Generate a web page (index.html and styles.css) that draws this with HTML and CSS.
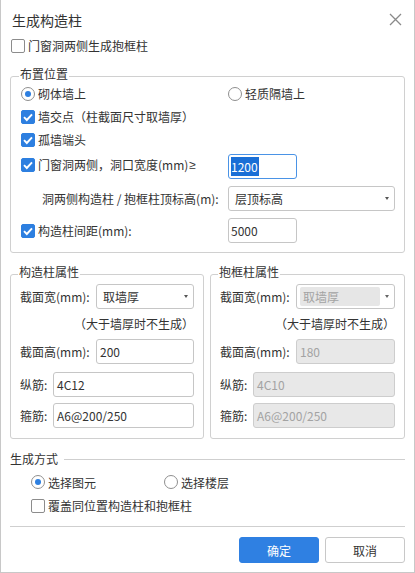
FILE: index.html
```html
<!DOCTYPE html>
<html lang="zh-CN">
<head>
<meta charset="utf-8">
<title>生成构造柱</title>
<link rel="stylesheet" href="styles.css">
</head>
<body>
<div class="dialog">
  <div class="header">
    <span class="title">生成构造柱</span>
    <svg class="close" viewBox="0 0 13 13"><path d="M1 1L12 12M12 1L1 12" stroke="#8a8a8a" stroke-width="1.3" fill="none"/></svg>
  </div>

  <label class="row top-check"><span class="cb"></span><span>门窗洞两侧生成抱框柱</span></label>

  <fieldset class="group place">
    <legend>布置位置</legend>
    <div class="radios">
      <label class="opt"><span class="rb on"></span>砌体墙上</label>
      <label class="opt"><span class="rb"></span>轻质隔墙上</label>
    </div>
    <label class="row mt5"><span class="cb on"><svg viewBox="0 0 14 14"><path d="M3 7.2L5.8 10L11 4.3" stroke="#fff" stroke-width="1.9" fill="none"/></svg></span>墙交点（柱截面尺寸取墙厚）</label>
    <label class="row mt3"><span class="cb on"><svg viewBox="0 0 14 14"><path d="M3 7.2L5.8 10L11 4.3" stroke="#fff" stroke-width="1.9" fill="none"/></svg></span>孤墙端头</label>
    <div class="frow mt4">
      <label class="flabel up"><span class="cb on"><svg viewBox="0 0 14 14"><path d="M3 7.2L5.8 10L11 4.3" stroke="#fff" stroke-width="1.9" fill="none"/></svg></span>门窗洞两侧，洞口宽度(mm)<span class="latin">≥</span></label>
      <div class="inp focus short"><span class="selected">1200</span></div>
    </div>
    <div class="frow mt7">
      <span class="flabel indent">洞两侧构造柱 / 抱框柱顶标高(m):</span>
      <div class="sel wide"><span class="v">层顶标高</span><span class="arr"></span></div>
    </div>
    <div class="frow mt7">
      <label class="flabel"><span class="cb on"><svg viewBox="0 0 14 14"><path d="M3 7.2L5.8 10L11 4.3" stroke="#fff" stroke-width="1.9" fill="none"/></svg></span>构造柱间距(mm):</label>
      <div class="inp short"><span>5000</span></div>
    </div>
  </fieldset>

  <div class="pair">
    <fieldset class="group attr left">
      <legend>构造柱属性</legend>
      <div class="frm"><span class="lw">截面宽(mm):</span><div class="sel grow"><span class="v">取墙厚</span><span class="arr"></span></div></div>
      <div class="note">（大于墙厚时不生成）</div>
      <div class="frm"><span class="lw">截面高(mm):</span><div class="inp grow">200</div></div>
      <div class="frm mt8"><span class="ln">纵筋:</span><div class="inp grow">4C12</div></div>
      <div class="frm mt6"><span class="ln">箍筋:</span><div class="inp grow">A6@200/250</div></div>
    </fieldset>
    <fieldset class="group attr right">
      <legend>抱框柱属性</legend>
      <div class="frm"><span class="lw">截面宽(mm):</span><div class="sel grow dis"><span class="v">取墙厚</span><span class="arr"></span></div></div>
      <div class="note">（大于墙厚时不生成）</div>
      <div class="frm"><span class="lw">截面高(mm):</span><div class="inp grow dis">180</div></div>
      <div class="frm mt8"><span class="ln">纵筋:</span><div class="inp grow dis">4C10</div></div>
      <div class="frm mt6"><span class="ln">箍筋:</span><div class="inp grow dis">A6@200/250</div></div>
    </fieldset>
  </div>

  <div class="section-title"><span>生成方式</span><span class="rule"></span></div>
  <div class="mode">
    <label class="opt m1"><span class="rb on"></span>选择图元</label>
    <label class="opt"><span class="rb"></span>选择楼层</label>
  </div>
  <label class="row cover"><span class="cb"></span>覆盖同位置构造柱和抱框柱</label>

  <div class="sep"></div>
  <div class="buttons">
    <button class="btn primary">确定</button>
    <button class="btn">取消</button>
  </div>
</div>
</body>
</html>
```

FILE: styles.css
```css
* { box-sizing: border-box; margin: 0; padding: 0; }

body {
  margin: 0;
  background: #fff;
  font-family: "Noto Sans CJK SC", "Noto Sans", sans-serif;
  font-size: 12px;
  color: #333;
}

.dialog {
  width: 415px;
  height: 573px;
  border: 1px solid #c8c8c8;
  border-top: none;
  padding: 0 9px;
  display: flex;
  flex-direction: column;
  background: #fff;
}

.header {
  height: 36px;
  flex: none;
  display: flex;
  justify-content: space-between;
  align-items: flex-start;
  padding: 10px 3px 0 2px;
}

.title { font-size: 14px; line-height: 20px; color: #333; }
.close { width: 13px; height: 13px; margin-top: 3px; }

.row {
  display: flex;
  align-items: center;
  height: 20px;
  line-height: 20px;
  flex: none;
}

.top-check { padding-left: 1px; }

.latin { font-family: "Liberation Sans", "DejaVu Sans", sans-serif; margin-left: 1px; }

.cb {
  width: 14px;
  height: 14px;
  flex: none;
  border: 1px solid #8c8c8c;
  border-radius: 2px;
  margin-right: 3px;
  display: flex;
  align-items: center;
  justify-content: center;
  background: #fff;
}
.cb.on { background: #2d7fe0; border-color: #2d7fe0; }
.cb svg { width: 14px; height: 14px; flex: none; }

.rb {
  width: 14px;
  height: 14px;
  flex: none;
  border: 1px solid #8f8f8f;
  border-radius: 50%;
  margin-right: 3px;
  display: flex;
  align-items: center;
  justify-content: center;
  background: #fff;
}
.rb.on::after {
  content: "";
  width: 6px;
  height: 6px;
  border-radius: 50%;
  background: #2d7fe0;
}

.opt { display: flex; align-items: center; }

.group {
  border: 1px solid #d0d0d0;
  border-radius: 3px;
  min-width: 0;
  flex: none;
}
.group legend {
  font-size: 12px;
  line-height: 16px;
  padding: 0 1px 4px;
  margin-left: -2px;
  color: #333;
}

.place {
  margin-top: 10px;
  padding: 0 9px 9px 10px;
}

.radios {
  display: grid;
  grid-template-columns: 207px 1fr;
  height: 16px;
  line-height: 16px;
}

.mt3 { margin-top: 3px; }
.mt4 { margin-top: 4px; }
.mt5 { margin-top: 5px; }
.mt6 { margin-top: 6px; }
.mt7 { margin-top: 7px; }
.mt8 { margin-top: 8px; }

.frow {
  display: grid;
  grid-template-columns: 207px 1fr;
  align-items: center;
  height: 25px;
}
.flabel { display: flex; align-items: center; line-height: 20px; white-space: nowrap; }
.flabel.up { padding-bottom: 4px; }
.flabel.indent { padding-left: 21px; }

.inp {
  height: 25px;
  border: 1px solid #c6c6c6;
  border-radius: 3px;
  padding: 0 3px;
  display: flex;
  align-items: center;
  background: #fff;
  color: #333;
  white-space: nowrap;
}
.inp.short { width: 69px; padding-left: 2px; }
.inp.focus { border-color: #4a93e6; }
.selected {
  background: #1a6fd6;
  color: #fff;
  line-height: 19px;
  padding: 0 1px 0 0;
}
.inp.dis { background: #e8e8e8; border-color: #cdcdcd; color: #a3a3a3; }

.sel {
  height: 25px;
  border: 1px solid #c6c6c6;
  border-radius: 3px;
  padding: 0 5px 0 6px;
  display: flex;
  align-items: center;
  background: #fff;
}
.sel .v { flex: 1; }
.sel .arr {
  width: 0;
  height: 0;
  border-left: 2.5px solid transparent;
  border-right: 2.5px solid transparent;
  border-top: 3px solid #555;
}
.sel.dis { padding: 2px 5px 2px 3px; }
.sel.dis .v {
  height: 100%;
  background: #e6e6e6;
  color: #a3a3a3;
  border-radius: 2px;
  padding-left: 3px;
  margin-right: 5px;
  display: flex;
  align-items: center;
}
.sel.dis .arr { border-top-color: #666; }

.pair {
  display: flex;
  gap: 6px;
  margin-top: 11px;
  flex: none;
}
.attr { padding: 0 9px 10px 9px; }
.attr.left { width: 194px; }
.attr.right { width: 195px; }

.frm {
  display: flex;
  align-items: center;
  height: 25px;
}
.lw { width: 76px; flex: none; white-space: nowrap; }
.ln { width: 33px; flex: none; white-space: nowrap; }
.grow { flex: 1; min-width: 0; }

.note {
  height: 30px;
  line-height: 30px;
  text-align: right;
  white-space: nowrap;
}

.section-title {
  display: flex;
  align-items: center;
  height: 18px;
  line-height: 18px;
  margin-top: 11px;
  flex: none;
}
.section-title .rule {
  flex: 1;
  border-top: 1px solid #cfcfcf;
  margin-left: 6px;
}

.mode {
  display: flex;
  align-items: center;
  height: 20px;
  margin-top: 4px;
  padding-left: 21px;
  flex: none;
}
.mode .m1 { width: 133px; }

.cover { margin-top: 4px; padding-left: 21px; }

.sep {
  border-top: 1px solid #cfcfcf;
  margin-top: 10px;
  flex: none;
}

.buttons {
  display: flex;
  justify-content: flex-end;
  gap: 6px;
  margin-top: 10px;
  flex: none;
}
.btn {
  width: 80px;
  height: 26px;
  border: 1px solid #c8c8c8;
  border-radius: 3px;
  background: #fff;
  color: #333;
  font-family: inherit;
  font-size: 12px;
}
.btn.primary { background: #2f80e2; border-color: #2f80e2; color: #fff; }
```
